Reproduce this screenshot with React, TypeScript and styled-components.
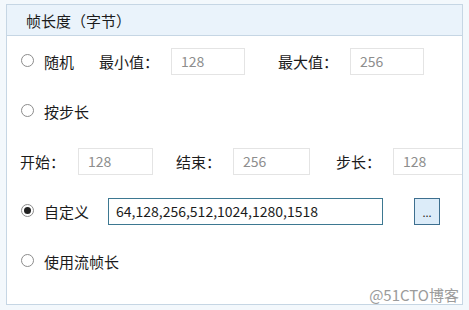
import styled, { createGlobalStyle } from "styled-components";

const GlobalStyle = createGlobalStyle`
  html, body {
    margin: 0;
    padding: 0;
    background: #f3f8fc;
  }
  body {
    font-family: "Noto Sans CJK SC", "Noto Sans", sans-serif;
    font-size: 15px;
    color: #1b1b1b;
  }
`;

const Page = styled.div`
  width: 469px;
  height: 310px;
  padding: 4px 0 0 6px;
  box-sizing: border-box;
  position: relative;
`;

const Frame = styled.div`
  width: 457px;
  height: 301px;
  box-sizing: border-box;
  border: 1px solid #c6d6e4;
  background: #fff;
  overflow: hidden;
`;

const Header = styled.div`
  height: 31px;
  box-sizing: border-box;
  background: #eaf3fb;
  border-bottom: 1px solid #c6d6e4;
  display: flex;
  align-items: center;
  padding-left: 19px;
  line-height: 1;
`;

const Row = styled.div<{ $indent?: number }>`
  height: 50px;
  display: flex;
  align-items: center;
  padding-left: ${(p) => p.$indent ?? 14}px;
  white-space: nowrap;
`;

const Option = styled.label<{ $w: number }>`
  width: ${(p) => p.$w}px;
  flex: none;
  display: flex;
  align-items: center;
  gap: 10px;
  line-height: 1;
`;

const Radio = styled.span<{ $on?: boolean }>`
  width: 13px;
  height: 13px;
  box-sizing: border-box;
  border-radius: 50%;
  border: 1px solid #8c8c8c;
  background: #fff;
  position: relative;
  margin-top: -2px;
  &::after {
    content: "";
    display: ${(p) => (p.$on ? "block" : "none")};
    position: absolute;
    left: 2px;
    top: 2px;
    width: 7px;
    height: 7px;
    border-radius: 50%;
    background: #222;
  }
`;

const Label = styled.span<{ $w: number; $ml?: number }>`
  width: ${(p) => p.$w}px;
  margin-left: ${(p) => p.$ml ?? 0}px;
  flex: none;
  line-height: 1;
`;

const Field = styled.div<{ $w: number }>`
  width: ${(p) => p.$w}px;
  height: 27px;
  flex: none;
  box-sizing: border-box;
  border: 1px solid #e4e4e4;
  color: #8d8d8d;
  display: flex;
  align-items: center;
  padding-left: 9px;
  font-size: 14px;
`;

const CustomField = styled(Field)`
  border-color: #3d7891;
  color: #1b1b1b;
  padding-left: 7px;
`;

const MoreButton = styled.div`
  width: 26px;
  height: 27px;
  margin-left: 31px;
  box-sizing: border-box;
  border: 1px solid #3d6f8f;
  background: #dcecf9;
  display: flex;
  align-items: flex-end;
  justify-content: center;
  padding-bottom: 6px;
  font-size: 11px;
  line-height: 1;
  color: #222;
`;

const Watermark = styled.div`
  position: absolute;
  right: 10px;
  bottom: 8px;
  font-size: 15px;
  color: #9b9b9b;
  line-height: 1;
`;

export default function App() {
  return (
    <>
      <GlobalStyle />
      <Page>
        <Frame>
          <Header>帧长度（字节）</Header>
          <Row>
            <Option $w={78}>
              <Radio />
              随机
            </Option>
            <Label $w={72}>最小值：</Label>
            <Field $w={74}>128</Field>
            <Label $w={72} $ml={33}>最大值：</Label>
            <Field $w={74}>256</Field>
          </Row>
          <Row>
            <Option $w={120}>
              <Radio />
              按步长
            </Option>
          </Row>
          <Row $indent={13}>
            <Label $w={58}>开始：</Label>
            <Field $w={75}>128</Field>
            <Label $w={57} $ml={23}>结束：</Label>
            <Field $w={77}>256</Field>
            <Label $w={57} $ml={26}>步长：</Label>
            <Field $w={75}>128</Field>
          </Row>
          <Row>
            <Option $w={87}>
              <Radio $on />
              自定义
            </Option>
            <CustomField $w={275}>64,128,256,512,1024,1280,1518</CustomField>
            <MoreButton>...</MoreButton>
          </Row>
          <Row>
            <Option $w={140}>
              <Radio />
              使用流帧长
            </Option>
          </Row>
        </Frame>
        <Watermark>@51CTO博客</Watermark>
      </Page>
    </>
  );
}
